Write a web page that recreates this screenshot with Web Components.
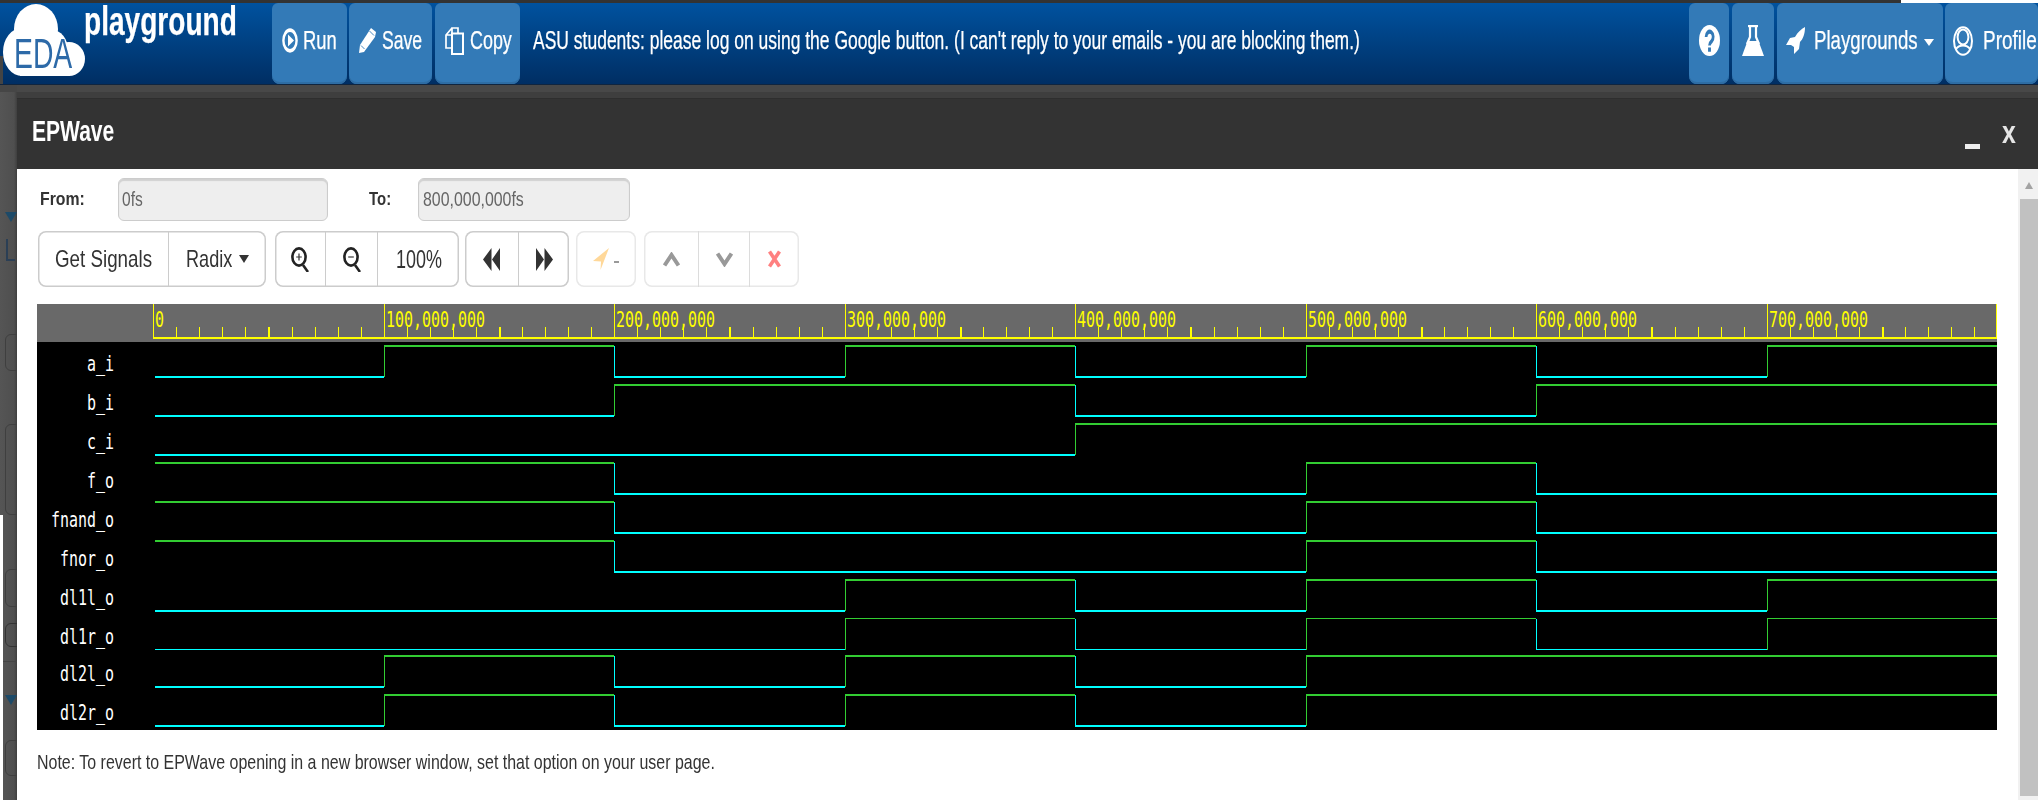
<!DOCTYPE html>
<html>
<head>
<meta charset="utf-8">
<title>EDA Playground - EPWave</title>
<style>
  html, body { margin: 0; height: 800px; overflow: hidden; background: #555; }
  body { font-family: "Liberation Sans", Arial, sans-serif; }
  #main { display: flex; height: 715px; }
  #right { flex: 1; min-width: 0; display: flex; flex-direction: column; }
</style>
</head>
<body>

<eda-header>
  <nav-btn w="75" pad="10" gap="5">
    <svg width="16" height="25" viewBox="0 0 16 16" preserveAspectRatio="none"><circle cx="8" cy="8" r="6.6" fill="none" stroke="#fff" stroke-width="2.4"/><path d="M6 4.2 12 8 6 11.8Z" fill="#fff"/></svg>
    <fit-text w="34" size="26">Run</fit-text>
  </nav-btn>
  <nav-btn w="83" pad="10" gap="6" style="margin-left:2px">
    <svg width="17" height="25" viewBox="0 0 17 25" preserveAspectRatio="none"><path d="M12 0 17 4 16 9 5 24 0 25 1 17Z" fill="#fff"/><path d="M10.5 3 15 7.5M2 17.5 5.5 21" stroke="#337ab7" stroke-width=".9"/></svg>
    <fit-text w="40" size="26">Save</fit-text>
  </nav-btn>
  <nav-btn w="85" pad="10" gap="6" style="margin-left:3px">
    <svg width="19" height="28" viewBox="0 0 19 28" preserveAspectRatio="none"><path d="M7 7V1H13V7M7 1 1 8V21H7M7 1V8H1" fill="none" stroke="#fff" stroke-width="1.7"/><rect x="7" y="6.5" width="11" height="20.5" fill="#337ab7" stroke="#fff" stroke-width="2"/></svg>
    <fit-text w="42" size="26">Copy</fit-text>
  </nav-btn>
  <fit-text w="827" size="25" style="margin-left:13px;margin-bottom:6px">ASU students: please log on using the Google button. (I can't reply to your emails - you are blocking them.)</fit-text>

  <nav-btn slot="end" w="40" pad="10">
    <svg width="21" height="31" viewBox="0 0 16 16" preserveAspectRatio="none"><circle cx="8" cy="8" r="8" fill="#fff"/><path d="M5.4 6.2A2.7 2.7 0 1 1 9.6 8.4C8.5 9.1 8 9.5 8 10.6" fill="none" stroke="#337ab7" stroke-width="2.1"/><rect x="6.9" y="11.6" width="2.2" height="2.2" fill="#337ab7"/></svg>
  </nav-btn>
  <nav-btn slot="end" w="42" pad="10" style="margin-left:3px">
    <svg width="22" height="31" viewBox="0 0 22 31" preserveAspectRatio="none"><path d="M6 1H16" stroke="#fff" stroke-width="2.4"/><path d="M8 2V12L5 19M14 2V12L17 19" fill="none" stroke="#fff" stroke-width="2.2"/><path d="M5.5 16H16.5L22 31H0Z" fill="#fff"/></svg>
  </nav-btn>
  <nav-btn slot="end" w="166" pad="9" gap="9" style="margin-left:3px">
    <svg width="19" height="27" viewBox="0 0 19 27" preserveAspectRatio="none"><path d="M19 0C19 7 17 12 14 15L13 22 8 27V20L5 18H0L4 11 9 10C12 5 15 2 19 0Z" fill="#fff"/></svg>
    <fit-text w="104" size="26">Playgrounds</fit-text>
    <svg width="10" height="7" viewBox="0 0 10 7" preserveAspectRatio="none" style="margin:4px 0 0 -3px"><path d="M0 0H10L5 7Z" fill="#fff"/></svg>
  </nav-btn>
  <nav-btn slot="end" w="93" pad="8" gap="10" style="margin-left:2px">
    <svg width="20" height="30" viewBox="0 0 20 30" preserveAspectRatio="none"><ellipse cx="10" cy="15" rx="9" ry="13.8" fill="none" stroke="#fff" stroke-width="2"/><ellipse cx="10" cy="11" rx="5.4" ry="7.6" fill="none" stroke="#fff" stroke-width="2"/><path d="M3 23C5 20 7 19.5 10 19.5S15 20 17 23" fill="none" stroke="#fff" stroke-width="2"/></svg>
    <fit-text w="54" size="26">Profile</fit-text>
  </nav-btn>
</eda-header>

<div id="main">
  <page-backdrop></page-backdrop>
  <div id="right">
    <dim-band></dim-band>
    <ep-modal>
      <span slot="title"><fit-text w="82" size="29" weight="700">EPWave</fit-text></span>

      <range-row></range-row>

      <ep-toolbar>
        <tool-group>
          <tool-cell w="130"><fit-text w="97" size="24">Get Signals</fit-text></tool-cell>
          <tool-cell w="98">
            <fit-text w="46" size="24">Radix</fit-text>
            <svg width="10" height="8" viewBox="0 0 10 8" preserveAspectRatio="none" style="margin-left:7px"><path d="M0 0H10L5 8Z" fill="#333"/></svg>
          </tool-cell>
        </tool-group>
        <tool-group style="margin-left:9px">
          <tool-cell w="50">
            <svg width="18" height="25" viewBox="0 0 18 25" preserveAspectRatio="none"><ellipse cx="8" cy="10" rx="6.6" ry="8.6" fill="none" stroke="#222" stroke-width="2.6"/><path d="M12 18 17 25" stroke="#222" stroke-width="2.6"/><path d="M5.2 10H10.8M8 6.4V13.6" stroke="#333" stroke-width="1.2"/></svg>
          </tool-cell>
          <tool-cell w="52">
            <svg width="18" height="25" viewBox="0 0 18 25" preserveAspectRatio="none"><ellipse cx="8" cy="10" rx="6.6" ry="8.6" fill="none" stroke="#222" stroke-width="2.6"/><path d="M12 18 17 25" stroke="#222" stroke-width="2.6"/><path d="M5.2 10H10.8" stroke="#555" stroke-width="1.4"/></svg>
          </tool-cell>
          <tool-cell w="82"><fit-text w="46" size="25">100%</fit-text></tool-cell>
        </tool-group>
        <tool-group style="margin-left:6px">
          <tool-cell w="53">
            <svg width="17" height="23" viewBox="0 0 17 23" preserveAspectRatio="none"><path d="M8.5 0V23L0 11.5ZM17 0V23L9 11.5Z" fill="#333"/></svg>
          </tool-cell>
          <tool-cell w="51">
            <svg width="17" height="23" viewBox="0 0 17 23" preserveAspectRatio="none"><path d="M0 0V23L8 11.5ZM8.5 0V23L17 11.5Z" fill="#333"/></svg>
          </tool-cell>
        </tool-group>
        <tool-group faded style="margin-left:7px">
          <tool-cell w="60">
            <svg width="16" height="22" viewBox="0 0 16 22" preserveAspectRatio="none"><path d="M16 0 0 13 8 13.5 7.5 22Z" fill="#ffd899"/></svg>
            <span style="width:5px;height:2px;background:#999;margin:5px 0 0 5px"></span>
          </tool-cell>
        </tool-group>
        <tool-group faded style="margin-left:8px">
          <tool-cell w="54">
            <svg width="17" height="15" viewBox="0 0 17 15" preserveAspectRatio="none"><path d="M1.5 13.5 8.5 3 15.5 13.5" fill="none" stroke="#999" stroke-width="4"/></svg>
          </tool-cell>
          <tool-cell w="51">
            <svg width="17" height="15" viewBox="0 0 17 15" preserveAspectRatio="none"><path d="M1.5 1.5 8.5 12 15.5 1.5" fill="none" stroke="#999" stroke-width="4"/></svg>
          </tool-cell>
          <tool-cell w="50">
            <svg width="13" height="18" viewBox="0 0 13 18" preserveAspectRatio="none"><path d="M1.5 1.5 11.5 16.5M11.5 1.5 1.5 16.5" stroke="#ff8080" stroke-width="3.6"/></svg>
          </tool-cell>
        </tool-group>
      </ep-toolbar>

      <wave-viewer></wave-viewer>

      <note-line><fit-text w="678" size="21">Note: To revert to EPWave opening in a new browser window, set that option on your user page.</fit-text></note-line>
    </ep-modal>
  </div>
</div>

<script>
  // text in the shot is squashed sideways, so scale each run to its measured width
  class FitText extends HTMLElement {
    constructor() {
      super();
      this.attachShadow({ mode: "open" });
    }
    connectedCallback() {
      const size = this.getAttribute("size") || 20;
      const weight = this.getAttribute("weight") || 400;
      const w = Number(this.getAttribute("w"));
      this.shadowRoot.innerHTML = `
        <style>
          :host {
            display: inline-block;
            flex: none;
            width: ${w}px;
            font: ${weight} ${size}px/1.15 "Liberation Sans", Arial, sans-serif;
          }
          span { display: inline-block; white-space: nowrap; transform-origin: 0 50%; }
        </style>
        <span><slot></slot></span>`;
      const inner = this.shadowRoot.querySelector("span");
      inner.style.transform = `scaleX(${w / inner.offsetWidth})`;
    }
  }

  class EdaHeader extends HTMLElement {
    constructor() {
      super();
      this.attachShadow({ mode: "open" });
      this.shadowRoot.innerHTML = `
        <style>
          :host {
            display: block;
            height: 85px;
            background: linear-gradient(90deg, #333 1901px, #fff 1901px);
            color: #fff;
            -webkit-text-stroke: .25px;
          }
          .bar {
            position: relative;
            height: 85px;
            box-sizing: border-box;
            border-top: 3px solid transparent;
            border-bottom: 1px solid #10253f;
            background: linear-gradient(#00529f, #002e63) padding-box;
            display: flex;
            align-items: stretch;
            overflow: hidden;
          }
          .bar::before {
            content: "";
            position: absolute;
            left: 0; bottom: 0;
            width: 3px; height: 28px;
            background: #444;
          }
          .logo { flex: none; width: 272px; position: relative; }
          .logo svg { display: block; position: absolute; left: 0; top: 0; }
          .logo .eda, .logo .pg { position: absolute; line-height: 1; }
          .logo .eda { left: 14px; top: 27px; color: #2d6aa8; -webkit-text-stroke: 0; }
          .logo .pg { left: 84px; top: -5px; filter: blur(.5px); }
          .start { display: flex; align-items: center; }
          .start ::slotted(nav-btn) { align-self: stretch; }
          .end { margin-left: auto; display: flex; align-items: stretch; }
        </style>
        <div class="bar">
          <div class="logo">
            <svg width="90" height="80" viewBox="0 3 90 80" fill="#fff">
              <ellipse cx="36" cy="29" rx="22" ry="25"/>
              <ellipse cx="22" cy="52" rx="19" ry="24"/>
              <ellipse cx="52" cy="50" rx="16" ry="20"/>
              <ellipse cx="69" cy="59" rx="16" ry="17"/>
              <rect x="20" y="45" width="50" height="31"/>
            </svg>
            <span class="eda"><fit-text w="58" size="42">EDA</fit-text></span>
            <span class="pg"><fit-text w="153" size="40" weight="700">playground</fit-text></span>
          </div>
          <div class="start"><slot></slot></div>
          <div class="end"><slot name="end"></slot></div>
        </div>`;
    }
  }

  class NavBtn extends HTMLElement {
    constructor() {
      super();
      this.attachShadow({ mode: "open" });
    }
    connectedCallback() {
      this.shadowRoot.innerHTML = `
        <style>
          :host {
            display: flex;
            flex: none;
            align-items: center;
            box-sizing: border-box;
            width: ${this.getAttribute("w")}px;
            padding: 0 0 6px ${this.getAttribute("pad") || 0}px;
            gap: ${this.getAttribute("gap") || 0}px;
            background: #337ab7;
            border-radius: 6px 6px 8px 8px;
            box-shadow: inset 0 -2px 0 #2e6da4;
            color: #fff;
          }
        </style>
        <slot></slot>`;
    }
  }

  class PageBackdrop extends HTMLElement {
    constructor() {
      super();
      this.attachShadow({ mode: "open" });
      // what shows of the dimmed page left of the dialog
      this.shadowRoot.innerHTML = `
        <style>
          :host {
            display: flex;
            flex-direction: column;
            flex: none;
            width: 17px;
            height: 715px;
            overflow: hidden;
            box-sizing: border-box;
            background: linear-gradient(90deg, #fff 3px, #555 3px, #4f4f4f 14px, #3f3f3f 17px) bottom / 100% 285px no-repeat,
                        linear-gradient(90deg, #555, #4f4f4f 14px, #3f3f3f 17px);
          }
          .top { height: 7px; background: #464646; }
          .tri { width: 0; height: 0; margin-left: 5px; border: solid transparent; border-width: 10px 6px 0; border-top-color: #1d4a68; }
          .ell { margin-left: 6px; width: 9px; height: 22px; border-left: 2px solid #2b3f55; border-bottom: 2px solid #2b3f55; box-sizing: border-box; }
          .box { margin-left: 5px; width: 20px; box-sizing: border-box; border: 1px solid #3f3f3f; border-radius: 6px; }
          .rule { margin-left: 3px; height: 1px; background: #444; }
        </style>
        <div class="top"></div>
        <div class="tri" style="margin-top:120px"></div>
        <div class="ell" style="margin-top:17px"></div>
        <div class="box" style="margin-top:73px;height:37px"></div>
        <div class="box" style="margin-top:53px;height:91px"></div>
        <div class="box" style="margin-top:54px;height:38px"></div>
        <div class="box" style="margin-top:16px;height:24px;border-color:#333"></div>
        <div class="rule" style="margin-top:14px"></div>
        <div class="tri" style="margin-top:33px"></div>
        <div class="box" style="margin-top:35px;height:36px"></div>`;
    }
  }

  class DimBand extends HTMLElement {
    constructor() {
      super();
      this.attachShadow({ mode: "open" });
      this.shadowRoot.innerHTML = `
        <style>
          :host {
            display: block;
            height: 14px;
            background: linear-gradient(#484848 0 7px, #3e3e3e 7px 13px, #2e2e2e 13px);
          }
        </style>`;
    }
  }

  class EpModal extends HTMLElement {
    constructor() {
      super();
      this.attachShadow({ mode: "open" });
      this.shadowRoot.innerHTML = `
        <style>
          :host { display: flex; flex-direction: column; flex: 1; min-height: 0; background: #fff; }
          .title {
            height: 70px;
            flex: none;
            display: flex;
            align-items: center;
            box-sizing: border-box;
            padding: 0 22px 4px 15px;
            background: #333;
            color: #fff;
          }
          .min { margin: 29px 0 0 auto; width: 15px; height: 5px; background: #eee; }
          .close { margin-left: 22px; }
          .body { flex: 1; min-height: 0; display: flex; }
          .content { flex: 1; min-width: 0; box-sizing: border-box; padding: 9px 0 0 20px; }
          .scroll { flex: none; width: 20px; display: flex; flex-direction: column; background: #f1f1f1; }
          .arrow { margin: 13px auto 0 7px; width: 0; height: 0; border: solid transparent; border-width: 0 4px 7px; border-bottom-color: #a3a3a3; }
          .thumb { margin: 10px 0 4px 2px; flex: 1; background: #c1c1c1; }
        </style>
        <div class="title">
          <slot name="title"></slot>
          <span class="min"></span>
          <span class="close"><fit-text w="14" size="32" weight="700" style="color:#e6e6e6">x</fit-text></span>
        </div>
        <div class="body">
          <div class="content"><slot></slot></div>
          <div class="scroll"><div class="arrow"></div><div class="thumb"></div></div>
        </div>`;
    }
  }

  class RangeRow extends HTMLElement {
    constructor() {
      super();
      this.attachShadow({ mode: "open" });
      this.shadowRoot.innerHTML = `
        <style>
          :host { display: flex; align-items: center; height: 43px; color: #333; }
          .in {
            box-sizing: border-box;
            height: 43px;
            display: flex;
            align-items: center;
            padding-left: 3px;
            background: #eee;
            border: 1px solid #ccc;
            border-radius: 6px;
            box-shadow: inset 0 2px 1px rgba(0,0,0,.12);
            color: #666;
          }
          .lb { margin-top: -2px; display: flex; }
        </style>
        <span class="lb" style="margin-left:3px;width:78px"><fit-text w="45" size="19" weight="700">From:</fit-text></span>
        <div class="in" style="width:210px"><fit-text w="21" size="20">0fs</fit-text></div>
        <span class="lb" style="margin-left:41px;width:49px"><fit-text w="22" size="19" weight="700">To:</fit-text></span>
        <div class="in" style="width:212px;padding-left:4px"><fit-text w="101" size="20">800,000,000fs</fit-text></div>`;
    }
  }

  class EpToolbar extends HTMLElement {
    constructor() {
      super();
      this.attachShadow({ mode: "open" });
      this.shadowRoot.innerHTML = `
        <style>
          :host { display: flex; height: 56px; margin: 10px 0 17px 1px; color: #333; }
        </style>
        <slot></slot>`;
    }
  }

  class ToolGroup extends HTMLElement {
    constructor() {
      super();
      this.attachShadow({ mode: "open" });
    }
    connectedCallback() {
      const line = this.hasAttribute("faded") ? "#e8e8e8" : "#ccc";
      this.shadowRoot.innerHTML = `
        <style>
          :host {
            display: flex;
            flex: none;
            --line: ${this.hasAttribute("faded") ? "#dcdcdc" : "#ccc"};
            box-shadow: inset 0 0 0 1.5px ${line};
            border-radius: 8px;
          }
        </style>
        <slot></slot>`;
    }
  }

  class ToolCell extends HTMLElement {
    constructor() {
      super();
      this.attachShadow({ mode: "open" });
    }
    connectedCallback() {
      this.shadowRoot.innerHTML = `
        <style>
          :host {
            display: flex;
            align-items: center;
            justify-content: center;
            box-sizing: border-box;
            width: ${this.getAttribute("w")}px;
            border-left: 1px solid var(--line, #ccc);
          }
          :host(:first-child) { border-left: 0; }
        </style>
        <slot></slot>`;
    }
  }

  // values flip at each listed 100ns step; rows are [name, first level, flips, stroke]
  const SIGNALS = [
    ["a_i", 0, [1, 2, 3, 4, 5, 6, 7], 2.4],
    ["b_i", 0, [2, 4, 6], 2.4],
    ["c_i", 0, [4], 1.2],
    ["f_o", 1, [2, 5, 6], 2],
    ["fnand_o", 1, [2, 5, 6], 2],
    ["fnor_o", 1, [2, 5, 6], 2],
    ["dl1l_o", 0, [3, 4, 5, 6, 7], 1.2],
    ["dl1r_o", 0, [3, 4, 5, 6, 7], 1.2],
    ["dl2l_o", 0, [1, 2, 3, 4, 5], 2],
    ["dl2r_o", 0, [1, 2, 3, 4, 5], 2]
  ];
  const RULER_X = 153.2, STEP = 230.5, END_X = 1997;
  const HIGH_Y = [346, 385, 424, 463, 502, 540.5, 580, 618.5, 656, 695];

  class WaveViewer extends HTMLElement {
    constructor() {
      super();
      this.attachShadow({ mode: "open" });
    }
    connectedCallback() {
      this.shadowRoot.innerHTML = `
        <style>
          :host { display: block; width: 1960px; height: 426px; }
          svg { display: block; shape-rendering: crispEdges; }
          text { font-family: "DejaVu Sans Mono", "Liberation Mono", monospace; shape-rendering: auto; }
        </style>
        <svg width="1960" height="426" viewBox="37 304 1960 426">
          <rect x="37" y="304" width="1960" height="426" fill="#000"/>
          <rect x="37" y="304" width="1960" height="38" fill="#696969"/>
          ${this.ruler()}
          ${SIGNALS.map((s, i) => this.row(s, HIGH_Y[i])).join("")}
        </svg>`;
    }
    ruler() {
      let out = `<rect x="${RULER_X}" y="337" width="${END_X - RULER_X}" height="2" fill="#ff0"/>
        <rect x="${END_X - 1}" y="304" width="1" height="34" fill="#ff0"/>`;
      for (let i = 0; i < 80; i++) {
        const x = Math.round(RULER_X + i * STEP / 10);
        if (i % 10 === 0) {
          const label = i === 0 ? "0" : (i * 10) + ",000,000";
          out += `<rect x="${x}" y="304" width="1" height="34" fill="#ff0"/>
            <text x="${x + 2}" y="327" font-size="21" fill="#ff0" textLength="${label.length * 9}" lengthAdjust="spacingAndGlyphs">${label}</text>`;
        } else {
          out += `<rect x="${x}" y="327" width="${i % 10 === 5 ? 2 : 1}" height="11" fill="#ff0"/>`;
        }
      }
      return out;
    }
    row([name, first, flips, stroke], high) {
      const low = high + 31, x0 = 155;
      const green = "#32cd32", cyan = "#00ffff";
      const xs = [x0, ...flips.map(f => Math.round(RULER_X + f * STEP)), END_X];
      let level = first, out = "";
      for (let i = 0; i < xs.length - 1; i++) {
        const y = level ? high : low;
        out += `<rect x="${xs[i]}" y="${y - stroke / 2}" width="${xs[i + 1] - xs[i]}" height="${stroke}" fill="${level ? green : cyan}"/>`;
        level = 1 - level;
        if (i < xs.length - 2) {
          out += `<rect x="${xs[i + 1]}" y="${high}" width="1" height="31" fill="${level ? green : cyan}"/>`;
        }
      }
      const n = name.length * 9;
      out += `<text x="${114 - n}" y="${high + 25}" font-size="22" fill="#fff" textLength="${n}" lengthAdjust="spacingAndGlyphs">${name}</text>`;
      return out;
    }
  }

  class NoteLine extends HTMLElement {
    constructor() {
      super();
      this.attachShadow({ mode: "open" });
      this.shadowRoot.innerHTML = `
        <style>
          :host { display: block; margin-top: 20px; color: #333; }
        </style>
        <slot></slot>`;
    }
  }

  customElements.define("fit-text", FitText);
  customElements.define("eda-header", EdaHeader);
  customElements.define("nav-btn", NavBtn);
  customElements.define("page-backdrop", PageBackdrop);
  customElements.define("dim-band", DimBand);
  customElements.define("ep-modal", EpModal);
  customElements.define("range-row", RangeRow);
  customElements.define("ep-toolbar", EpToolbar);
  customElements.define("tool-group", ToolGroup);
  customElements.define("tool-cell", ToolCell);
  customElements.define("wave-viewer", WaveViewer);
  customElements.define("note-line", NoteLine);
</script>
</body>
</html>
